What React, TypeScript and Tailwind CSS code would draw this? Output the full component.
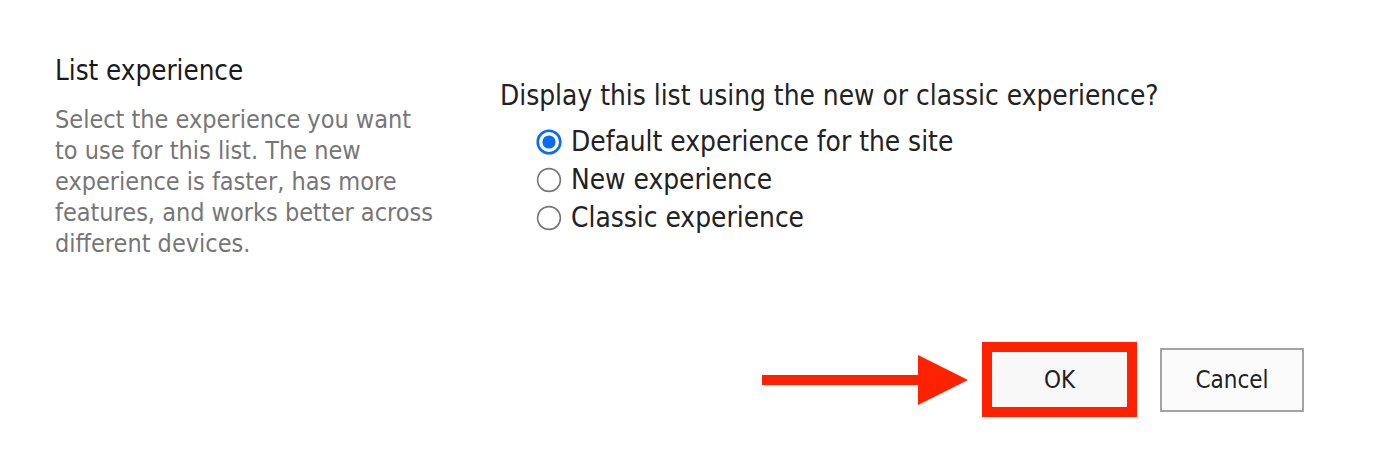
import React, { useState } from 'react';

const options = [
  { id: 'default', label: 'Default experience for the site' },
  { id: 'new', label: 'New experience' },
  { id: 'classic', label: 'Classic experience' },
];

function RadioDot({ checked }: { checked: boolean }) {
  return (
    <svg width="26" height="26" viewBox="0 0 26 26" className="shrink-0">
      {checked ? (
        <>
          <circle cx="13" cy="13" r="11.3" fill="#fff" stroke="#0a6cf5" strokeWidth="2.6" />
          <circle cx="13" cy="13" r="6.6" fill="#0a6cf5" />
        </>
      ) : (
        <circle cx="13" cy="13" r="11.4" fill="#fff" stroke="#767676" strokeWidth="1.6" />
      )}
    </svg>
  );
}

export default function App() {
  const [choice, setChoice] = useState('default');

  return (
    <div className="flex h-[464px] w-[1386px] flex-col bg-white font-['DejaVu_Sans_Condensed','DejaVu_Sans',sans-serif] text-[#222]">
      <div className="flex pt-[55px]">
        {/* Left: section description */}
        <div className="w-[446px] shrink-0 pl-[55px]">
          <h2 className="text-[27.5px] leading-[30px] text-[#1a1a1a]">List experience</h2>
          <p className="mt-[19px] w-[385px] text-[25px] leading-[31px] text-[#767676]">
            Select the experience you want to use for this list. The new experience is faster, has more
            features, and works better across different devices.
          </p>
        </div>

        {/* Right: choice */}
        <div className="pl-[54px] pt-[26px]">
          <p className="text-[27.8px] leading-[30px]">Display this list using the new or classic experience?</p>
          <div className="mt-[12px] flex flex-col pl-[36px]">
            {options.map((o) => (
              <label
                key={o.id}
                className="flex h-[38px] cursor-pointer items-center gap-[9px] text-[27.8px]"
                onClick={() => setChoice(o.id)}
              >
                <RadioDot checked={choice === o.id} />
                <span>{o.label}</span>
              </label>
            ))}
          </div>
        </div>
      </div>

      {/* Actions */}
      <div className="mt-auto flex items-center justify-end pb-[47px] pr-[82px]">
        <svg width="206" height="52" viewBox="0 0 206 52" className="mr-[14px]">
          <rect x="0" y="21" width="158" height="10" fill="#ff2200" />
          <polygon points="156,1 206,26 156,51" fill="#ff2200" />
        </svg>
        <button className="h-[75px] w-[155px] border-[10px] border-[#ff2200] bg-[#f8f8f8] text-[24px] text-[#222]">
          OK
        </button>
        <button className="ml-[23px] h-[64px] w-[144px] border-2 border-[#a3a3a3] bg-[#fbfbfb] text-[24px] text-[#222]">
          Cancel
        </button>
      </div>
    </div>
  );
}
